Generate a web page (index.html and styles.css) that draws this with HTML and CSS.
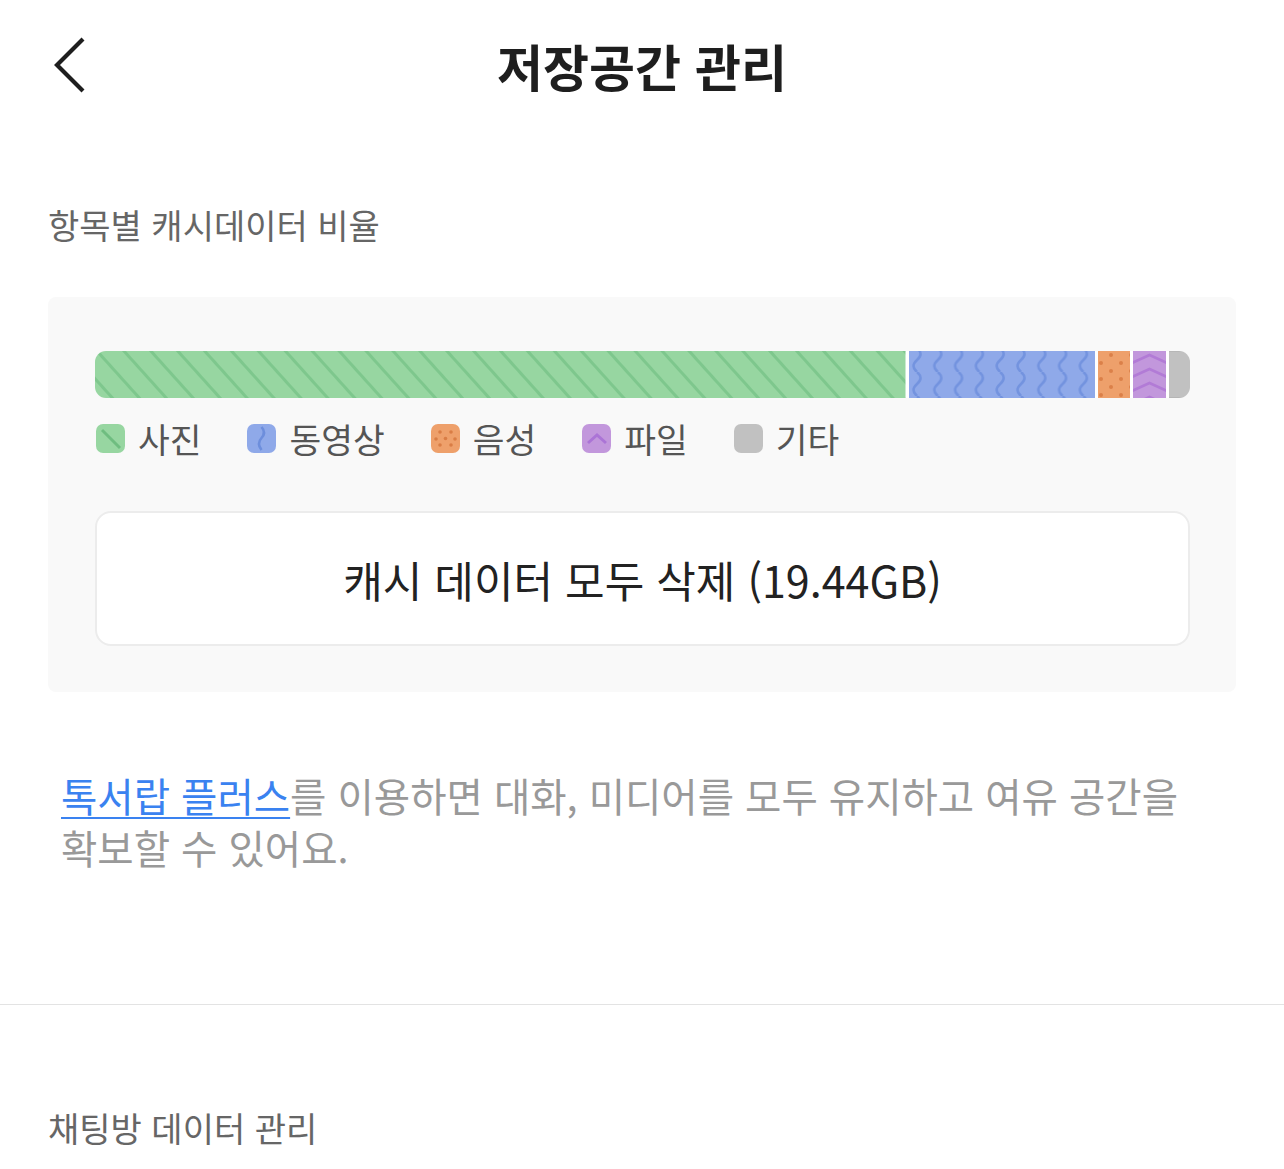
FILE: index.html
```html
<!DOCTYPE html>
<html lang="ko">
<head>
    <meta charset="UTF-8">
    <meta name="viewport" content="width=device-width, initial-scale=1.0">
    <title>저장공간 관리</title>
    <link rel="stylesheet" href="styles.css">
</head>
<body>
    <!-- Top bar -->
    <header class="topbar">
        <div class="back">
            <svg width="34" height="58" viewBox="0 0 34 58">
                <polyline points="30,3 4,29 30,55" fill="none" stroke="#1e1e1e" stroke-width="4.2"/>
            </svg>
        </div>
        <h1 class="title">저장공간 관리</h1>
        <div></div>
    </header>

    <main class="page">
        <h2 class="section-label">항목별 캐시데이터 비율</h2>

        <!-- Cache usage card -->
        <div class="card">
            <div class="usage-bar">
                <div class="seg" style="flex: 809">
                    <svg width="100%" height="100%">
                        <defs>
                            <pattern id="p-photo" width="20" height="20" patternUnits="userSpaceOnUse" patternTransform="rotate(-42)">
                                <rect width="20" height="20" fill="#97d6a1"/>
                                <rect x="0" width="3" height="20" fill="#7ec78d"/>
                            </pattern>
                        </defs>
                        <rect width="100%" height="100%" fill="url(#p-photo)"/>
                    </svg>
                </div>
                <div class="seg" style="flex: 186">
                    <svg width="100%" height="100%">
                        <defs>
                            <pattern id="p-video" width="20.8" height="24" x="-2" y="-3" patternUnits="userSpaceOnUse">
                                <rect width="21" height="24" fill="#8fa9e9"/>
                                <path d="M10,0 Q17,6 10,12 Q3,18 10,24" fill="none" stroke="#7393df" stroke-width="2.6"/>
                            </pattern>
                        </defs>
                        <rect width="100%" height="100%" fill="url(#p-video)"/>
                    </svg>
                </div>
                <div class="seg" style="flex: 32">
                    <svg width="100%" height="100%">
                        <defs>
                            <pattern id="p-voice" width="20" height="16" x="3" y="0" patternUnits="userSpaceOnUse">
                                <rect width="20" height="16" fill="#eea06b"/>
                                <circle cx="10" cy="4" r="2" fill="#db8049"/>
                                <circle cx="0" cy="12" r="2" fill="#db8049"/>
                                <circle cx="20" cy="12" r="2" fill="#db8049"/>
                            </pattern>
                        </defs>
                        <rect width="100%" height="100%" fill="url(#p-voice)"/>
                    </svg>
                </div>
                <div class="seg" style="flex: 33">
                    <svg width="100%" height="100%">
                        <defs>
                            <pattern id="p-file" width="33" height="14" x="0" y="1" patternUnits="userSpaceOnUse">
                                <rect width="33" height="14" fill="#c297dc"/>
                                <polyline points="-1,11 16.5,3 34,11" fill="none" stroke="#b27bd6" stroke-width="2.6"/>
                            </pattern>
                        </defs>
                        <rect width="100%" height="100%" fill="url(#p-file)"/>
                    </svg>
                </div>
                <div class="seg seg-etc" style="flex: 21"></div>
            </div>

            <div class="legend">
                <div class="legend-item">
                    <svg class="chip" viewBox="0 0 29 29">
                        <rect width="29" height="29" rx="7" fill="#97d6a1"/>
                        <line x1="6" y1="6" x2="24" y2="24" stroke="#6fbd80" stroke-width="3"/>
                    </svg>
                    <span>사진</span>
                </div>
                <div class="legend-item">
                    <svg class="chip" viewBox="0 0 29 29">
                        <rect width="29" height="29" rx="7" fill="#8fa9e9"/>
                        <path d="M14.5,3 Q19.5,8.5 14.5,14 Q9.5,19.5 14.5,26" fill="none" stroke="#6d8edc" stroke-width="2.6"/>
                    </svg>
                    <span>동영상</span>
                </div>
                <div class="legend-item">
                    <svg class="chip" viewBox="0 0 29 29">
                        <rect width="29" height="29" rx="7" fill="#eea06b"/>
                        <circle cx="9" cy="8" r="1.8" fill="#d97d45"/>
                        <circle cx="20" cy="8" r="1.8" fill="#d97d45"/>
                        <circle cx="14.5" cy="14.5" r="1.8" fill="#d97d45"/>
                        <circle cx="5" cy="15" r="1.8" fill="#d97d45"/>
                        <circle cx="24" cy="15" r="1.8" fill="#d97d45"/>
                        <circle cx="9" cy="21" r="1.8" fill="#d97d45"/>
                        <circle cx="20" cy="21" r="1.8" fill="#d97d45"/>
                    </svg>
                    <span>음성</span>
                </div>
                <div class="legend-item">
                    <svg class="chip" viewBox="0 0 29 29">
                        <rect width="29" height="29" rx="7" fill="#c297dc"/>
                        <polyline points="6,19 15,11 24,19" fill="none" stroke="#ab74d6" stroke-width="3"/>
                    </svg>
                    <span>파일</span>
                </div>
                <div class="legend-item">
                    <svg class="chip" viewBox="0 0 29 29">
                        <rect width="29" height="29" rx="7" fill="#c1c1c1"/>
                    </svg>
                    <span>기타</span>
                </div>
            </div>

            <button class="clear-btn">캐시 데이터 모두 삭제 (19.44GB)</button>
        </div>

        <p class="notice"><a href="#" class="link">톡서랍 플러스</a>를 이용하면 대화, 미디어를 모두 유지하고 여유 공간을 확보할 수 있어요.</p>
    </main>

    <hr class="divider">

    <section class="page">
        <h2 class="section-label chat-label">채팅방 데이터 관리</h2>
    </section>
</body>
</html>
```

FILE: styles.css
```css
body {
    margin: 0;
    padding: 0;
    font-family: "Noto Sans CJK KR", "Noto Sans", sans-serif;
    background: #fff;
    color: #1e1e1e;
}

/* Top bar */
.topbar {
    height: 130px;
    display: grid;
    grid-template-columns: 1fr auto 1fr;
    align-items: center;
}

.back {
    padding-left: 53px;
    display: flex;
    align-items: center;
}

.title {
    margin: 0;
    font-size: 50px;
    font-weight: 700;
    line-height: 56px;
    color: #1e1e1e;
}

/* Content */
.page {
    padding: 0 48px;
}

.section-label {
    margin: 75px 0 0;
    font-size: 34px;
    font-weight: 400;
    line-height: 40px;
    color: #666;
}

.card {
    margin-top: 52px;
    background: #f9f9f9;
    border-radius: 8px;
    padding: 54px 46px 46px 47px;
}

.usage-bar {
    display: flex;
    gap: 3px;
    height: 47px;
    border-radius: 11px;
    overflow: hidden;
    background: #fff;
}

.seg {
    min-width: 0;
    box-shadow: inset 0 1px 0 rgba(0,0,0,0.05), inset 0 -1px 0 rgba(0,0,0,0.06);
}

.seg svg {
    display: block;
}

.seg-etc {
    background: #c1c1c1;
}

/* Legend */
.legend {
    display: flex;
    gap: 46px;
    margin-top: 20px;
    padding-left: 1px;
}

.legend-item {
    display: flex;
    align-items: center;
    gap: 13px;
    font-size: 34.5px;
    line-height: 40px;
    color: #555;
}

.chip {
    width: 29px;
    height: 29px;
    display: block;
}

.clear-btn {
    display: block;
    width: 100%;
    height: 135px;
    margin-top: 53px;
    background: #fff;
    border: 2px solid #ececec;
    border-radius: 16px;
    font-family: inherit;
    font-size: 43px;
    color: #222;
    cursor: pointer;
}

.notice {
    margin: 77px 0 0;
    padding: 0 30px 0 13px;
    font-size: 39.5px;
    line-height: 52px;
    color: #999;
    word-break: keep-all;
}

.link {
    color: #3a82f0;
    text-decoration: underline;
    text-decoration-thickness: 2px;
    text-underline-offset: 5px;
}

.divider {
    margin: 131px 0 0;
    border: 0;
    border-top: 1px solid #e3e3e3;
}

.chat-label {
    margin-top: 103px;
}
```
